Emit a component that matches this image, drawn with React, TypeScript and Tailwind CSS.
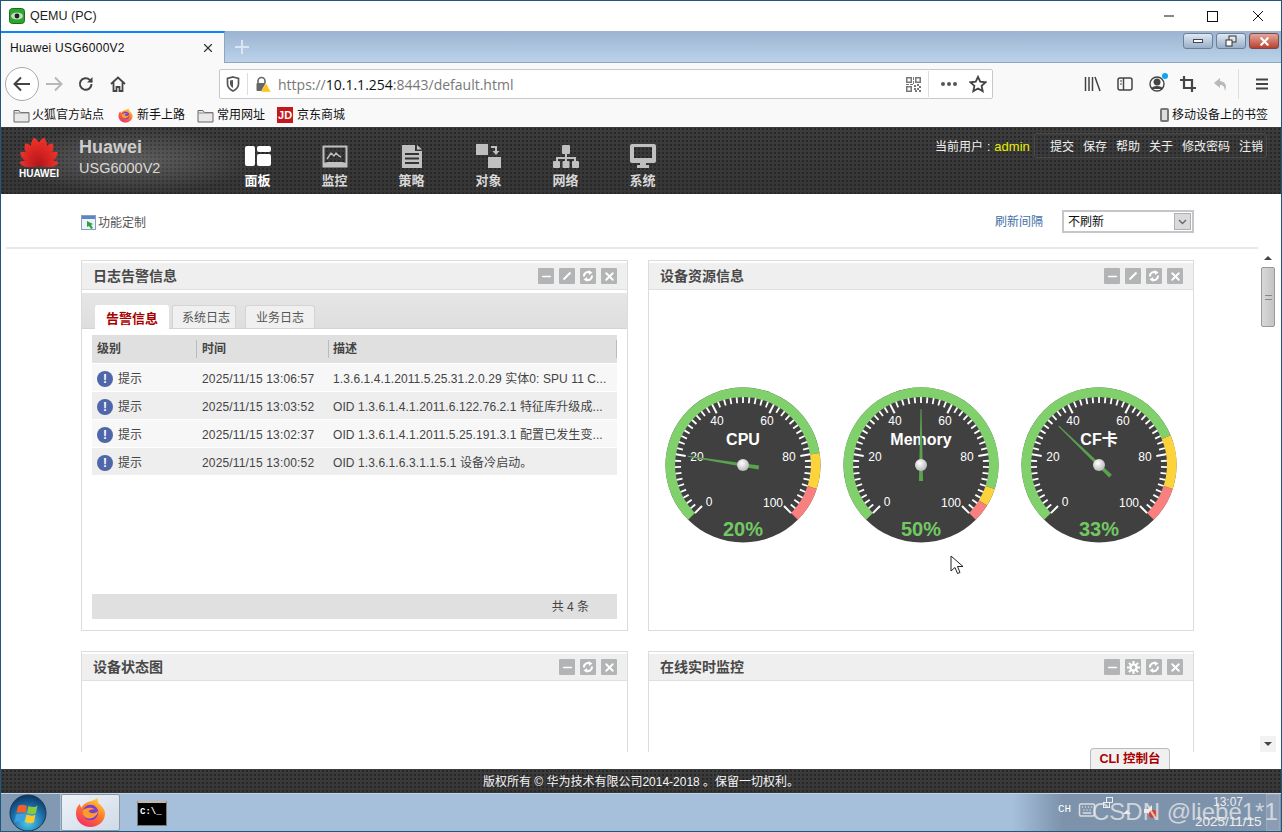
import React from "react";
import { Minus, X, Keyboard } from "lucide-react";

const polar = (cx: number, cy: number, r: number, deg: number) => {
  const a = ((deg - 90) * Math.PI) / 180;
  return [cx + r * Math.cos(a), cy + r * Math.sin(a)];
};

const valueToDeg = (v: number) => -135 + (v / 100) * 270;

const arc = (cx: number, cy: number, r: number, from: number, to: number) => {
  const [x1, y1] = polar(cx, cy, r, valueToDeg(from));
  const [x2, y2] = polar(cx, cy, r, valueToDeg(to));
  const large = valueToDeg(to) - valueToDeg(from) > 180 ? 1 : 0;
  return `M${x1} ${y1}A${r} ${r} 0 ${large} 1 ${x2} ${y2}`;
};

const Gauge = ({
  title,
  value,
  yellow,
  red,
}: {
  title: string;
  value: number;
  yellow: number;
  red: number;
}) => {
  const cx = 89;
  const cy = 80;
  const ticks = Array.from({ length: 51 }, (_, i) => i * 2);
  const labels = [
    { t: "0", x: -34, y: 37 },
    { t: "20", x: -46, y: -8 },
    { t: "40", x: -26, y: -44 },
    { t: "60", x: 24, y: -44 },
    { t: "80", x: 46, y: -8 },
    { t: "100", x: 30, y: 38 },
  ];
  const deg = valueToDeg(value);
  return (
    <svg width="178" height="162" viewBox="0 0 178 162" className="shrink-0">
      <defs>
        <radialGradient id={`pivot-${title}`} cx="0.4" cy="0.35" r="0.7">
          <stop offset="0" stopColor="#ffffff" />
          <stop offset="1" stopColor="#b4b4b4" />
        </radialGradient>
      </defs>
      <circle cx={cx} cy={cy} r="77.5" fill="#404040" />
      <path d={arc(cx, cy, 72.7, 0, yellow)} fill="none" stroke="#80d16c" strokeWidth="9.6" />
      <path d={arc(cx, cy, 72.7, yellow, red)} fill="none" stroke="#fdd33b" strokeWidth="9.6" />
      <path d={arc(cx, cy, 72.7, red, 100)} fill="none" stroke="#fa8080" strokeWidth="9.6" />
      {ticks.map((v) => {
        const major = v % 20 === 0;
        const [x1, y1] = polar(cx, cy, 68, valueToDeg(v));
        const [x2, y2] = polar(cx, cy, major ? 58 : 62, valueToDeg(v));
        return <line key={v} x1={x1} y1={y1} x2={x2} y2={y2} stroke="#fff" strokeWidth={major ? 2 : 1.8} />;
      })}
      {labels.map((l) => (
        <text
          key={l.t}
          x={cx + l.x}
          y={cy + l.y + 4}
          textAnchor="middle"
          fill="#fff"
          fontSize="12"
          fontFamily="'Liberation Sans',sans-serif"
        >
          {l.t}
        </text>
      ))}
      <text
        x={cx}
        y={cy - 20}
        textAnchor="middle"
        fill="#fff"
        fontSize="16"
        fontWeight="700"
        fontFamily="'Liberation Sans','Noto Sans CJK SC',sans-serif"
      >
        {title}
      </text>
      <text
        x={cx}
        y={cy + 71}
        textAnchor="middle"
        fill="#72c862"
        fontSize="20"
        fontWeight="700"
        fontFamily="'Liberation Sans',sans-serif"
      >
        {value}%
      </text>
      <polygon
        points={`${cx - 2},${cy + 16} ${cx - 0.5},${cy - 56} ${cx + 0.5},${cy - 56} ${cx + 2},${cy + 16}`}
        fill="#5aa24e"
        transform={`rotate(${deg} ${cx} ${cy})`}
      />
      <circle cx={cx} cy={cy} r="6" fill={`url(#pivot-${title})`} />
    </svg>
  );
};

const PanelButton = ({ children }: { children: React.ReactNode }) => (
  <span className="w-4 h-4 bg-[#b2b4b6] flex items-center justify-center text-white rounded-[1px]">{children}</span>
);

const Pencil = () => (
  <svg width="10" height="10" viewBox="0 0 10 10">
    <path d="M1.5 8.5L8.5 1.5" stroke="#fff" strokeWidth="2" />
  </svg>
);

const Sync = () => (
  <svg width="12" height="12" viewBox="0 0 12 12" fill="none" stroke="#fff" strokeWidth="2">
    <path d="M2 6.500A4 4 0 018 2.600" />
    <path d="M10 5.500A4 4 0 014 9.400" />
    <path d="M6.500 0l4 2.500-3.500 2.500zM5.500 12l-4-2.500L5 7z" fill="#fff" stroke="none" />
  </svg>
);

const Gear = () => (
  <svg width="13" height="13" viewBox="0 0 13 13" fill="none" stroke="#fff">
    <circle cx="6.500" cy="6.500" r="3" strokeWidth="2.200" />
    <path
      d="M6.500 0v3M6.500 10v3M0 6.500h3M10 6.500h3M1.900 1.900L4 4M9 9l2.100 2.100M11.100 1.900L9 4M4 9l-2.100 2.100"
      strokeWidth="2"
    />
  </svg>
);

const Panel = ({
  title,
  tools,
  className,
  children,
}: {
  title: string;
  tools: string[];
  className: string;
  children?: React.ReactNode;
}) => (
  <div className={`border border-[#dcdcdc] pt-[2px] flex flex-col bg-white ${className}`}>
    <div className="h-[27px] shrink-0 bg-[#efefef] border-b border-[#e0e0e0] flex items-center pl-[11px] pr-[10px]">
      <span className="text-[14px] font-bold text-[#484848]">{title}</span>
      <div className="ml-auto flex gap-[5px]">
        {tools.map((t) => (
          <PanelButton key={t}>
            {t === "min" && <Minus size={13} strokeWidth={3} />}
            {t === "edit" && <Pencil />}
            {t === "gear" && <Gear />}
            {t === "refresh" && <Sync />}
            {t === "close" && <X size={13} strokeWidth={3.5} />}
          </PanelButton>
        ))}
      </div>
    </div>
    {children}
  </div>
);

const Folder = () => (
  <svg width="17" height="15" viewBox="0 0 17 15" className="shrink-0">
    <path d="M1 2.500h5l1.500 2H16v9.500H1z" fill="#e8e8e8" stroke="#666" />
    <path d="M1 5h15" stroke="#8a8a8a" />
  </svg>
);

const Firefox = ({ size }: { size: number }) => (
  <svg width={size} height={size} viewBox="0 0 32 32" className="shrink-0">
    <defs>
      <linearGradient id={`ff-${size}`} x1="0.8" y1="0" x2="0.2" y2="1">
        <stop offset="0" stopColor="#ffd43a" />
        <stop offset="0.45" stopColor="#ff7a2a" />
        <stop offset="1" stopColor="#f0286a" />
      </linearGradient>
    </defs>
    <path
      d="M23 1c1 3 0 4 2 6 3 3 6 6 6 10 0 8-7 14-15 14S1 25 1 17c0-5 2-8 4-10 0 2 1 3 2 4 1-3 4-5 7-6 3-1 7-2 9-4z"
      fill={`url(#ff-${size})`}
    />
    <circle cx="16" cy="16" r="8" fill="#7a3fd0" />
    <path d="M8 14c3-3 9-4 13-1-3-1-6 0-7 2 3 3 8 2 10-1-1 6-6 9-11 8-4-1-6-5-5-8z" fill="#ff9a2e" />
  </svg>
);

const Petals = () => (
  <svg width="40" height="30" viewBox="0 0 40 30">
    <defs>
      <linearGradient id="petal" x1="0" y1="0" x2="0" y2="1">
        <stop offset="0" stopColor="#f2332a" />
        <stop offset="1" stopColor="#b3141a" />
      </linearGradient>
    </defs>
    {[
      [-80, 0.68],
      [-54, 0.8],
      [-31, 0.92],
      [-10, 1],
      [10, 1],
      [31, 0.92],
      [54, 0.8],
      [80, 0.68],
    ].map(([r, s], i) => (
      <path
        key={i}
        d="M20 29C17 22 14.500 14 15.500 8C16 4 18 2 20 0C22 2 24 4 24.500 8C25.500 14 23 22 20 29z"
        fill="url(#petal)"
        transform={`rotate(${r} 20 29) translate(20 29) scale(${s}) translate(-20 -29)`}
      />
    ))}
  </svg>
);

const gray = "#c0c0c0";

const navItems: { label: string; icon: React.ReactNode; active?: boolean }[] = [
  {
    label: "面板",
    active: true,
    icon: (
      <svg width="28" height="22" viewBox="0 0 28 22" fill="#fff">
        <rect x="1" y="1" width="10" height="20" rx="2" />
        <rect x="13" y="1" width="14" height="6" rx="2" />
        <rect x="13" y="9" width="14" height="12" rx="2" />
      </svg>
    ),
  },
  {
    label: "监控",
    icon: (
      <svg width="26" height="23" viewBox="0 0 26 23" fill="none" stroke={gray}>
        <path d="M1.500 1.500h23v20h-23z" strokeWidth="2" />
        <path d="M5 14l4-6 3 3 2-3 3 3 2 1" strokeWidth="1.400" />
        <path d="M1 18l5-1h14l5 1v4H1z" fill={gray} stroke="none" />
      </svg>
    ),
  },
  {
    label: "策略",
    icon: (
      <svg width="22" height="23" viewBox="0 0 22 23" fill={gray}>
        <path d="M1 0h13v6h7v17H1zM16 0l5 4.500h-5z" />
        <path d="M4 8h14v2H4zM4 12.500h14v2H4zM4 17h14v2H4z" fill="#333" />
      </svg>
    ),
  },
  {
    label: "对象",
    icon: (
      <svg width="26" height="24" viewBox="0 0 26 24" fill={gray}>
        <rect x="0" y="0" width="12" height="11" />
        <rect x="12" y="13" width="13" height="11" />
        <path d="M15 2h6v5h2.500l-3.500 4-3.500-4H19V4h-4z" />
      </svg>
    ),
  },
  {
    label: "网络",
    icon: (
      <svg width="26" height="23" viewBox="0 0 26 23" fill={gray}>
        <rect x="9" y="0" width="8" height="9" rx="1" />
        <path d="M12 9h2v3h9v4h-2v-2h-7v2h-2v-2H5v2H3v-4h9z" />
        <rect x="0" y="16" width="7" height="7" rx="1" />
        <rect x="9.500" y="16" width="7" height="7" rx="1" />
        <rect x="19" y="16" width="7" height="7" rx="1" />
      </svg>
    ),
  },
  {
    label: "系统",
    icon: (
      <svg width="26" height="24" viewBox="0 0 26 24" fill={gray}>
        <path d="M2 0h22a2 2 0 012 2v15a2 2 0 01-2 2H2a2 2 0 01-2-2V2a2 2 0 012-2zm2 3v11h18V3z" fillRule="evenodd" />
        <path d="M10 19h6v2h3v3H7v-3h3z" />
      </svg>
    ),
  },
];

const rows = [
  ["2025/11/15 13:06:57", "1.3.6.1.4.1.2011.5.25.31.2.0.29 实体0: SPU 11 C..."],
  ["2025/11/15 13:03:52", "OID 1.3.6.1.4.1.2011.6.122.76.2.1 特征库升级成..."],
  ["2025/11/15 13:02:37", "OID 1.3.6.1.4.1.2011.5.25.191.3.1 配置已发生变..."],
  ["2025/11/15 13:00:52", "OID 1.3.6.1.6.3.1.1.5.1 设备冷启动。"],
];

const dots =
  "bg-[radial-gradient(circle_at_center,#272727_1.1px,transparent_1.5px),linear-gradient(#3c3c3c,#363636)] bg-[length:4px_4px,100%_100%]";

export default function App() {
  return (
    <div className="w-[1282px] h-[832px] border border-[#1b5a78] flex flex-col overflow-hidden bg-white relative font-['Liberation_Sans','Noto_Sans_CJK_SC',sans-serif] text-[12px]">
      {/* qemu title bar */}
      <div className="h-[30px] shrink-0 flex items-center bg-white pl-[8px] relative">
        <svg width="16" height="16" viewBox="0 0 16 16" className="shrink-0">
          <rect x="0.500" y="0.500" width="15" height="15" rx="3" fill="#2aa82a" stroke="#1c6a1c" />
          <ellipse cx="8" cy="8" rx="6" ry="3.500" fill="#c8d8c8" />
          <circle cx="8" cy="8" r="2.400" fill="#222" />
        </svg>
        <span className="ml-[5px] text-[12.5px] text-[#222]">QEMU (PC)</span>
        <div className="ml-auto flex items-center">
          <svg width="12" height="12" viewBox="0 0 12 12" className="mr-[32px]">
            <path d="M1 6h10" stroke="#111" />
          </svg>
          <svg width="11" height="11" viewBox="0 0 11 11" className="mr-[34px]">
            <rect x="0.500" y="0.500" width="10" height="10" fill="none" stroke="#111" />
          </svg>
          <svg width="12" height="12" viewBox="0 0 12 12" className="mr-[17px]">
            <path d="M1 1l10 10M11 1L1 11" stroke="#111" />
          </svg>
        </div>
      </div>

      {/* browser tab strip */}
      <div className="h-[32px] shrink-0 bg-gradient-to-b from-[#9cb4d1] to-[#bbd2ea] flex items-start border-b border-[#8fa6bf]">
        <div className="w-[224px] h-[32px] bg-[#f9f9fa] border-t-2 border-[#0a84ff] border-r border-r-[#8fa6bf] flex items-center pl-[9px] pr-[9px] text-[12px] tracking-[0.25px] text-[#111]">
          Huawei USG6000V2
          <X size={14} className="ml-auto text-[#333]" />
        </div>
        <svg width="16" height="16" viewBox="0 0 16 16" className="ml-[9px] mt-[8px]">
          <path d="M8 1v14M1 8h14" stroke="#dbe6f2" strokeWidth="2" />
        </svg>
        <div className="ml-auto mr-[2px] mt-[2px] flex gap-[3px]">
          <span className="w-[30px] h-[16px] rounded-[3px] border border-[#6d7f95] bg-gradient-to-b from-[#dfe8f2] to-[#98afc9] flex items-center justify-center">
            <span className="w-[10px] h-[4px] bg-white border border-[#445]" />
          </span>
          <span className="w-[30px] h-[16px] rounded-[3px] border border-[#6d7f95] bg-gradient-to-b from-[#dfe8f2] to-[#98afc9] flex items-center justify-center">
            <svg width="12" height="12" viewBox="0 0 12 12">
              <rect x="4" y="1" width="7" height="6" fill="#dfe8f2" stroke="#333" />
              <rect x="1" y="5" width="6" height="6" fill="#fff" stroke="#333" />
            </svg>
          </span>
          <span className="w-[30px] h-[16px] rounded-[3px] border border-[#7a4a44] bg-gradient-to-b from-[#e2a79c] to-[#b8402e] flex items-center justify-center">
            <X size={13} strokeWidth={4} className="text-white" />
          </span>
        </div>
      </div>

      {/* nav toolbar */}
      <div className="h-[38px] shrink-0 bg-[#f9f9fa] flex items-center relative pt-[4px]">
        <div className="ml-[4px] w-[34px] h-[34px] rounded-full border border-[#aaa] bg-white flex items-center justify-center">
          <svg width="18" height="16" viewBox="0 0 18 16" fill="none" stroke="#444" strokeWidth="2">
            <path d="M17 8H2M8 1.500L1.500 8 8 14.500" />
          </svg>
        </div>
        <svg width="18" height="16" viewBox="0 0 18 16" fill="none" stroke="#b8b8b8" strokeWidth="2" className="ml-[6px]">
          <path d="M1 8h15M10 1.500L16.500 8 10 14.500" />
        </svg>
        <svg width="16" height="16" viewBox="0 0 16 16" fill="none" stroke="#444" strokeWidth="2" className="ml-[15px]">
          <path d="M13.500 8a5.800 5.800 0 11-1.700-4.100L14 6" />
          <path d="M14.500 1v5.500H9" fill="#444" stroke="none" />
        </svg>
        <svg width="16" height="16" viewBox="0 0 16 16" fill="none" stroke="#444" strokeWidth="1.800" className="ml-[16px]">
          <path d="M1 8l7-6.500L15 8M3.500 6.500V15h3v-4h3v4h3V6.500" />
        </svg>
        <div className="ml-[92px] absolute left-[126px] w-[774px] h-[30px] bg-white border border-[#c8c8c8] rounded-[2px] flex items-center">
          <svg width="14" height="16" viewBox="0 0 14 16" className="ml-[6px]" fill="none" stroke="#555" strokeWidth="1.700">
            <path d="M7 1l5.500 1.500V8c0 3-2.500 5.500-5.500 7-3-1.500-5.500-4-5.500-7V2.500z" />
            <path d="M7 4v8c-1.500-1-3-2.500-3-4.500V4.500z" fill="#555" stroke="none" />
          </svg>
          <span className="w-px h-[22px] bg-[#ddd] ml-[7px]" />
          <span className="relative ml-[7px] w-[16px] h-[16px]">
            <svg width="16" height="16" viewBox="0 0 16 16">
              <path d="M3 8V5a3.500 3.500 0 017 0v3" fill="none" stroke="#666" strokeWidth="1.600" />
              <rect x="1.500" y="7" width="9" height="8" rx="1" fill="#666" />
              <path d="M11 7l5 9H6z" fill="#fcc419" stroke="#fff" strokeWidth="0.500" />
            </svg>
          </span>
          <span className="ml-[7px] text-[14px] text-[#777] font-['Open_Sans','Liberation_Sans',sans-serif]">
            https://<span className="text-[#111]">10.1.1.254</span>:8443/default.html
          </span>
          <svg width="15" height="15" viewBox="0 0 15 15" className="ml-auto" fill="#777">
            <path d="M0 0h6v6H0zM1.500 1.500v3h3v-3zM9 0h6v6H9zM10.500 1.500v3h3v-3zM0 9h6v6H0zM1.500 10.500v3h3v-3z" fillRule="evenodd" />
            <path d="M7 0h1v3H7zM7 4h1v3H7zM0 7h3v1H0zM4 7h3v1H4zM8 8h2v2H8zM11 7h2v2h-2zM13 9h2v2h-2zM8 11h2v2H8zM11 11h2v2h-2zM9 13h2v2H9zM13 13h2v2h-2z" />
          </svg>
          <span className="w-px h-[26px] bg-[#ddd] ml-[7px]" />
          <span className="ml-[12px] flex gap-[2px]">
            <span className="w-[4px] h-[4px] rounded-full bg-[#555]" />
            <span className="w-[4px] h-[4px] rounded-full bg-[#555]" />
            <span className="w-[4px] h-[4px] rounded-full bg-[#555]" />
          </span>
          <svg width="18" height="18" viewBox="0 0 24 24" fill="none" stroke="#444" strokeWidth="2.400" className="ml-[12px] mr-[5px]">
            <path d="M12 2.500l3 6.500 7 .8-5.200 4.700 1.500 7L12 17.900l-6.300 3.600 1.500-7L2 9.800 9 9z" />
          </svg>
        </div>
        <div className="ml-auto flex items-center text-[#555]">
          <svg width="17" height="16" viewBox="0 0 17 16" fill="none" stroke="#444" strokeWidth="1.500" className="mr-[16px]">
            <path d="M1.500 1v14M5 1v14M8.500 1v14M11 1l5 14" />
          </svg>
          <svg width="16" height="14" viewBox="0 0 16 14" fill="none" stroke="#444" strokeWidth="1.500" className="mr-[16px]">
            <rect x="1" y="1" width="14" height="12" rx="2" />
            <path d="M6.500 1v12" />
            <path d="M3 4h2M3 7h2" strokeWidth="1" />
          </svg>
          <span className="relative mr-[15px] w-[16px] h-[16px]">
            <svg width="16" height="16" viewBox="0 0 16 16" fill="none" stroke="#444" strokeWidth="1.400">
              <circle cx="8" cy="8" r="7" />
              <circle cx="8" cy="6" r="2.800" fill="#444" />
              <path d="M3 13c1-3 9-3 10 0" fill="#444" />
            </svg>
            <span className="absolute -top-[3px] -right-[3px] w-[6px] h-[6px] rounded-full bg-[#0ea5f0]" />
          </span>
          <svg width="16" height="16" viewBox="0 0 16 16" fill="none" stroke="#444" strokeWidth="2.200" className="mr-[17px]">
            <path d="M4 0v12h12M0 4h12v12" />
          </svg>
          <svg width="15" height="15" viewBox="0 0 15 15" fill="#b9b9b9" className="mr-[10px]">
            <path d="M7 1L1 6l6 5V8c3 0 4.500 1.500 5 6 2-5 1-9-5-10z" />
          </svg>
          <span className="w-px h-[30px] bg-[#ddd] mr-[16px]" />
          <svg width="14" height="14" viewBox="0 0 14 14" fill="#444" className="mr-[12px]">
            <path d="M1 1.500h12v2H1zM1 6h12v2H1zM1 10.500h12v2H1z" />
          </svg>
        </div>
      </div>

      {/* bookmarks */}
      <div className="h-[26px] shrink-0 bg-[#f9f9fa] flex items-center text-[12px] text-[#111] pt-[2px]">
        <span className="ml-[12px]"><Folder /></span>
        <span className="ml-[2px]">火狐官方站点</span>
        <span className="ml-[14px]"><Firefox size={15} /></span>
        <span className="ml-[4px]">新手上路</span>
        <span className="ml-[12px]"><Folder /></span>
        <span className="ml-[3px]">常用网址</span>
        <span className="ml-[12px] w-[16px] h-[16px] bg-[#c8161d] text-white text-[11px] font-bold flex items-center justify-center">JD</span>
        <span className="ml-[4px]">京东商城</span>
        <span className="ml-auto flex items-center mr-[13px]">
          <span className="w-[9px] h-[14px] rounded-[2px] border-2 border-[#777] bg-[#ddd] mr-[3px]" />
          移动设备上的书签
        </span>
      </div>

      {/* app header */}
      <div className={`h-[67px] shrink-0 flex relative ${dots}`}>
        <div className="absolute left-0 top-0 h-full w-[260px] bg-[radial-gradient(ellipse_at_center,rgba(255,255,255,0.2),transparent_70%)]" />
        <div className="relative ml-[18px] w-[40px] mt-[10px] flex flex-col items-center">
          <Petals />
          <span className="text-[10px] font-bold text-white leading-[10px] mt-[2px]">HUAWEI</span>
        </div>
        <div className="relative ml-[20px] mt-[10px]">
          <div className="text-[18px] font-bold text-[#cccccc] leading-[20px]">Huawei</div>
          <div className="text-[14.500px] text-[#d8d8d8] leading-[20px] mt-[1px]">USG6000V2</div>
        </div>
        <div className="absolute left-[218px] top-0 flex">
          {navItems.map((n) => (
            <div key={n.label} className="w-[77px] flex flex-col items-center pt-[17px]">
              <div className="h-[24px] flex items-center">{n.icon}</div>
              <span className={`mt-[4px] text-[13px] font-bold leading-[18px] ${n.active ? "text-white" : "text-[#d8d8d8]"}`}>
                {n.label}
              </span>
            </div>
          ))}
        </div>
        <div className="absolute left-[934px] top-[12px] text-[#eee] leading-[16px] whitespace-nowrap">
          当前用户<span className="mx-[4px]">:</span>
          <span className="text-[13px] text-[#e8f000]">admin</span>
        </div>
        <div className="absolute left-[1033px] top-[6px] w-[233px] h-[25px] pt-[2px] border border-[#484848] rounded-[2px] flex items-center text-[#f0f0f0]">
          <span className="ml-[15px]">提交</span>
          <span className="ml-[9px]">保存</span>
          <span className="ml-[9px]">帮助</span>
          <span className="ml-[9px]">关于</span>
          <span className="ml-[9px]">修改密码</span>
          <span className="ml-[9px]">注销</span>
        </div>
      </div>

      {/* page body */}
      <div className="h-[575px] shrink-0 flex flex-col bg-white relative">
        <div className="h-[53px] shrink-0 flex items-center pl-[80px] pr-[87px] pt-[2px]">
          <span className="flex items-center mt-[2px]">
            <svg width="15" height="15" viewBox="0 0 15 15" className="shrink-0">
              <rect x="0.500" y="0.500" width="14" height="14" fill="#eef3fa" stroke="#8aa0bf" />
              <rect x="1" y="1" width="13" height="3" fill="#5a86c8" />
              <path d="M6 6l6 3-2 1 2 3-2 1-2-3-2 1z" fill="#2f9e3f" />
            </svg>
            <span className="ml-[2px] text-[#555]">功能定制</span>
          </span>
          <span className="ml-auto text-[#3f6fa6]">刷新间隔</span>
          <div className="ml-[19px] w-[132px] h-[23px] border-2 border-[#c4c6ca] flex items-center pl-[4px] text-[#111]">
            不刷新
            <span className="ml-auto mr-[1px] w-[17px] h-[17px] bg-[#d8dadc] border border-[#b0b0b0] flex items-center justify-center">
              <svg width="9" height="6" viewBox="0 0 9 6" fill="none" stroke="#666" strokeWidth="1.400">
                <path d="M1 1l3.500 3.500L8 1" />
              </svg>
            </span>
          </div>
        </div>

        <div className="ml-[5px] w-[1252px] h-[2px] shrink-0 bg-[#e8e8e8]" />

        <div className="h-[503px] shrink-0 flex">
          <div className="ml-[80px] w-[1113px] pt-[11px] overflow-hidden">
            <div className="grid grid-cols-[547px_546px] gap-x-[20px] gap-y-[20px]">
              <Panel title="日志告警信息" tools={["min", "edit", "refresh", "close"]} className="h-[371px]">
                <div className="h-[36px] shrink-0 mt-[3px] bg-gradient-to-b from-[#e6e6e6] to-[#dedede] flex items-end pl-[13px] border-b border-[#d4d4d4]">
                  <span className="w-[74px] h-[24px] pt-[3px] bg-white rounded-t-[3px] flex items-center justify-center text-[13px] font-bold text-[#a80000] -mb-px">
                    告警信息
                  </span>
                  <span className="ml-[3px] w-[64px] h-[23px] pl-[4px] pt-[2px] bg-[#f0f0f0] border border-b-0 border-[#d4d4d4] rounded-t-[3px] flex items-center justify-center text-[#555]">
                    系统日志
                  </span>
                  <span className="ml-[9px] w-[70px] h-[23px] pt-[2px] bg-[#f0f0f0] border border-b-0 border-[#d4d4d4] rounded-t-[3px] flex items-center justify-center text-[#555]">
                    业务日志
                  </span>
                </div>
                <div className="mx-[10px] mt-[6px] flex-1 flex flex-col mb-[11px]">
                  <div className="h-[28px] shrink-0 bg-[#e0e0e0] flex items-center font-bold text-[#444] mb-px">
                    <span className="w-[105px] pl-[5px] h-[18px] leading-[18px] border-r border-[#bbb]">级别</span>
                    <span className="w-[132px] pl-[5px] h-[18px] leading-[18px] border-r border-[#bbb]">时间</span>
                    <span className="flex-1 pl-[4px] h-[18px] leading-[18px] border-r border-[#bbb]">描述</span>
                  </div>
                  {rows.map((r, i) => (
                    <div
                      key={r[0]}
                      className={`h-[27px] mb-px pt-[2px] shrink-0 flex items-center text-[#444] ${i % 2 ? "bg-[#eeeeee]" : "bg-[#f7f7f7]"}`}
                    >
                      <span className="w-[105px] pl-[5px] flex items-center">
                        <span className="w-[16px] h-[16px] rounded-full bg-[#4f66ab] text-white text-[12px] font-bold flex items-center justify-center">
                          !
                        </span>
                        <span className="ml-[5px]">提示</span>
                      </span>
                      <span className="w-[131px] pl-[5px] whitespace-nowrap tracking-[0.16px]">{r[0]}</span>
                      <span className="flex-1 pl-[5px] whitespace-nowrap tracking-[0.09px]">{r[1]}</span>
                    </div>
                  ))}
                  <div className="mt-auto h-[25px] shrink-0 bg-[#e0e0e0] flex items-center justify-end pr-[28px] text-[#444]">
                    共 4 条
                  </div>
                </div>
              </Panel>

              <Panel title="设备资源信息" tools={["min", "edit", "refresh", "close"]} className="h-[371px]">
                <div className="flex justify-center pt-[95px]">
                  <Gauge title="CPU" value={20} yellow={80} red={90} />
                  <Gauge title="Memory" value={50} yellow={90} red={95} />
                  <Gauge title="CF卡" value={33} yellow={75} red={90} />
                </div>
              </Panel>

              <Panel title="设备状态图" tools={["min", "refresh", "close"]} className="h-[300px]" />
              <Panel title="在线实时监控" tools={["min", "gear", "refresh", "close"]} className="h-[300px]" />
            </div>
          </div>

          {/* scrollbar */}
          <div className="ml-[66px] w-[16px] flex flex-col items-center bg-white">
            <div className="h-[18px] w-full flex items-center justify-center">
              <span className="w-0 h-0 border-x-[4px] border-x-transparent border-b-[4px] border-b-[#444]" />
            </div>
            <div className="w-[14px] h-[60px] bg-gradient-to-r from-[#d8d8d8] to-[#c4c4c4] border border-[#999] rounded-[2px] flex items-center justify-center">
              <span className="w-[7px] h-[5px] border-y border-[#888]" />
            </div>
            <div className="mt-auto h-[16px] w-full bg-[#f2f2f2] flex items-center justify-center">
              <span className="w-0 h-0 border-x-[4px] border-x-transparent border-t-[4px] border-t-[#444]" />
            </div>
          </div>
        </div>

        <div className="absolute right-[111px] bottom-0 w-[80px] h-[21px] bg-[#f0f0f0] border border-b-0 border-[#bbb] rounded-t-[4px] flex items-center justify-center text-[12.500px] font-bold text-[#a80000]">
          CLI 控制台
        </div>
      </div>

      {/* app footer */}
      <div className={`h-[24px] shrink-0 flex items-center justify-center text-[#f5f5f5] pt-[2px] ${dots}`}>
        版权所有 © 华为技术有限公司2014-2018 。保留一切权利。
      </div>

      {/* windows taskbar */}
      <div className="flex-1 flex items-stretch bg-gradient-to-r from-[#a6c0dc] from-[79%] to-[#7d92ab] to-[83%] border-t border-[#c4d4e4] relative">
        <div className="w-[59px] bg-[#8299b4] flex items-center pl-[8px]">
          <svg width="38" height="38" viewBox="0 0 38 38">
            <defs>
              <radialGradient id="orb" cx="0.5" cy="0.75" r="0.75">
                <stop offset="0" stopColor="#4fd0ee" />
                <stop offset="0.6" stopColor="#1a6aa8" />
                <stop offset="1" stopColor="#0c3560" />
              </radialGradient>
            </defs>
            <circle cx="19" cy="19" r="18" fill="url(#orb)" stroke="#1b3650" />
            <path d="M9 12c3-2 6-1 9 0l-1.500 7c-3-1-6-1-9 0z" fill="#f0602a" />
            <path d="M19.500 12c3 1 6 2 9-.5l-1.500 7.500c-3 2-6 1-9 0z" fill="#8cc83c" />
            <path d="M7 20.500c3-1 6-1 9 0L14.500 28c-3-1-6-1-9 .5z" fill="#3aa0e0" />
            <path d="M17.500 20.500c3 1 6 2 9 0L25 28c-3 2-6 1-9 0z" fill="#fcc82e" />
          </svg>
        </div>
        <div className="w-[59px] ml-[1px] mb-px bg-gradient-to-br from-[#eef2f7] to-[#cfdbe8] border border-[#8a98a8] rounded-[2px] flex items-center justify-center">
          <Firefox size={31} />
        </div>
        <div className="ml-[17px] my-[5px] w-[30px] h-[26px] bg-black border border-[#777] border-t-[3px] border-t-[#b8b8b8] text-white font-['Liberation_Mono',monospace] text-[9px] leading-[18px] pl-[2px] self-center font-bold">
          C:\_
        </div>
        <div className="ml-auto relative w-[230px] text-white">
          <span className="absolute left-[7px] top-[7px] font-['Liberation_Mono',monospace] text-[11px]">CH</span>
          <Keyboard size={18} className="absolute left-[27px] top-[7px] text-[#ddd]" />
          <svg width="12" height="12" viewBox="0 0 12 12" className="absolute left-[51px] top-[3px]" fill="none" stroke="#eee">
            <rect x="4.500" y="0.500" width="6" height="5" />
            <rect x="1.500" y="5.500" width="6" height="5" />
          </svg>
          <span className="absolute left-[72px] top-[16px] w-0 h-0 border-x-[4px] border-x-transparent border-b-[4px] border-b-[#eee]" />
          <svg width="14" height="14" viewBox="0 0 14 14" className="absolute left-[92px] top-[10px]">
            <path d="M1 5h4l4-4v12L5 9H1z" fill="#eee" />
            <circle cx="10" cy="10" r="4" fill="#d83a2a" />
          </svg>
          <span className="absolute left-[162px] -top-px text-[12px] text-[#eee]">13:07</span>
          <span className="absolute left-[144px] top-[18px] text-[13.500px] text-[#eee] whitespace-nowrap">2025/11/15</span>
          <span className="absolute right-[1px] top-0 bottom-px w-[14px] border border-[#9aa9ba] bg-[#8a9db4]" />
        </div>
        <span className="absolute left-[1091px] top-[2px] text-[24px] leading-[32px] text-[#ececec]/75 whitespace-nowrap">
          CSDN @liebe1*1
        </span>
      </div>

      {/* mouse pointer */}
      <svg width="14" height="20" viewBox="0 0 14 20" className="absolute left-[949px] top-[554px]">
        <path d="M1 1v15l4-3.500 2.500 6 2.500-1-2.500-6H13z" fill="#fff" stroke="#222" strokeWidth="1" />
      </svg>
    </div>
  );
}
